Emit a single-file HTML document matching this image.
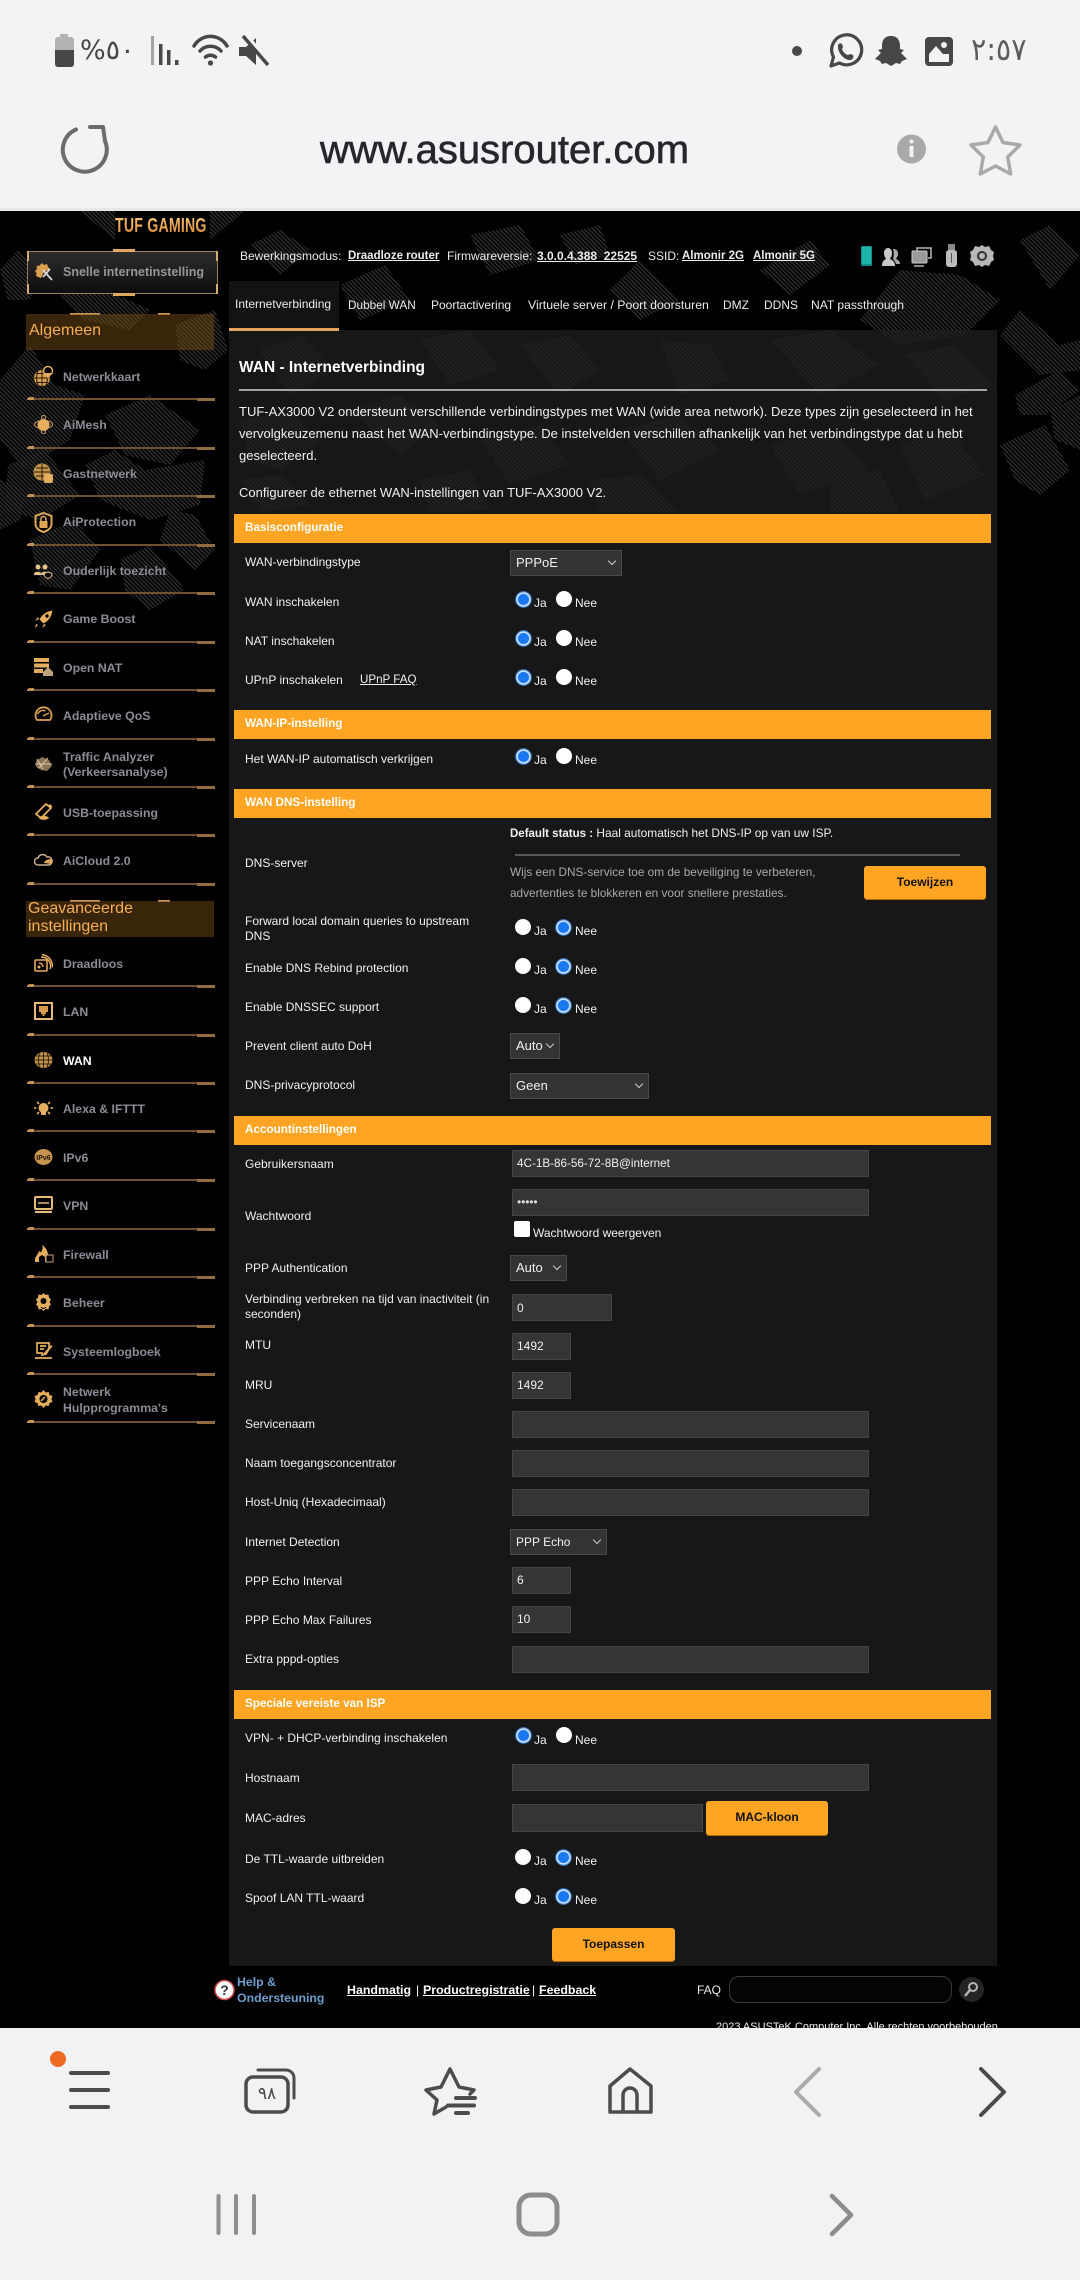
<!DOCTYPE html>
<html><head><meta charset="utf-8"><title>WAN - Internetverbinding</title>
<style>
*{box-sizing:border-box}
html,body{margin:0;padding:0;background:#000}
#p{position:relative;width:1080px;height:2280px;overflow:hidden;background:#000;font-family:"Liberation Sans","DejaVu Sans",sans-serif;color:#fff}
#p>*{position:absolute}
.t{white-space:nowrap;line-height:18px;font-size:12px;color:#f0f0f0}
.h{left:234px;width:757px;height:29px;background:#ffa523;color:#fff;font-weight:bold;font-size:11.700px;line-height:28px;padding-left:11px;white-space:nowrap}
.r{width:16px;height:16px;border-radius:50%;background:#fff}
.c{width:17px;height:17px;border-radius:50%;background:radial-gradient(circle,#1a78f2 0 5.2px,#dbe8fb 6px 6.6px,#5f9fe8 7.4px,#1c4f8a 8.4px)}
.in{height:27px;background:#353535;border:1px solid #444;left:512px}
.se{height:26px;background:#333;border:1px solid #484848;left:510px;color:#f0f0f0;font-size:13px;line-height:24px;padding-left:5px}
.se i{position:absolute;right:6px;top:7px;width:6px;height:6px;border-right:1px solid #ccc;border-bottom:1px solid #ccc;transform:rotate(45deg)}
.b{background:#ffa523;border-radius:3px;color:#111;font-weight:bold;font-size:12px;text-align:center;box-shadow:0 1px 0 #b06c10}
.s{left:27px;width:188px;height:2px;background:#6f5130}
.s:before{content:"";position:absolute;left:0;top:-1px;width:7px;height:3px;background:#c4935a;border-radius:3px 0 0 0}
.s:after{content:"";position:absolute;right:0;top:0;width:18px;height:3px;background:#8f6c42}
.n{left:63px;font-weight:bold;font-size:12.300px;line-height:16px;color:#8b8c96;white-space:nowrap}
.ic{left:34px;width:19px;height:19px}
.tb{color:#ececec;font-size:12px;line-height:18px;white-space:nowrap}
.bb{font-weight:bold;font-size:11.500px}
u{text-underline-offset:1px}
</style></head><body><div id="p">

<!-- light chrome -->
<div style="left:0;top:0;width:1080px;height:208px;background:#f2f3f5"></div>
<div style="left:0;top:208px;width:1080px;height:3px;background:#e6e7e9"></div>

<!-- camouflage background -->
<svg style="left:0;top:211px" width="1080" height="460" viewBox="0 211 1080 460">
<defs><pattern id="ha" width="3" height="3" patternUnits="userSpaceOnUse" patternTransform="rotate(45)"><rect width="3" height="1.300" fill="#333"/></pattern></defs>
<g fill="url(#ha)">
<polygon points="80,211 115,211 115,240"/><polygon points="210,240 245,211 210,211"/>
<polygon points="0,270 18,250 40,275 30,300 8,300"/>
<polygon points="60,295 95,285 150,310 130,330 85,320"/>
<polygon points="0,380 30,345 55,385 85,395 70,440 25,470 0,440"/>
<polygon points="175,325 215,310 228,350 205,370 180,360"/>
<polygon points="105,415 150,395 200,430 170,465 125,455"/>
<polygon points="8,465 45,450 80,495 40,520 5,510"/>
<polygon points="85,465 115,450 145,470 205,460 200,505 150,520 100,500"/>
<polygon points="170,510 195,515 215,550 195,570 160,540"/>
<polygon points="0,480 25,490 20,520 0,530"/>
<polygon points="30,540 75,520 100,550 70,590 40,585"/>
<polygon points="120,560 150,545 185,590 150,610 125,590"/>
<polygon points="250,245 280,230 310,250 280,275"/>
<polygon points="340,285 385,265 410,300 360,320"/>
<polygon points="470,235 520,225 540,260 490,275"/>
<polygon points="610,290 640,260 680,300 640,320"/>
<polygon points="560,235 600,225 610,255 575,265"/>
<polygon points="760,270 810,240 830,265 790,295"/>
<polygon points="860,320 900,270 960,275 1000,300 965,335 900,345"/>
<polygon points="1020,240 1050,225 1080,255 1050,290"/>
<polygon points="1000,335 1020,310 1060,345 1080,340 1080,370 1040,375"/>
<polygon points="1015,395 1060,370 1080,390 1045,415 1020,415"/>
<polygon points="1050,410 1080,395 1080,450 1055,440"/>
<polygon points="1000,445 1045,425 1070,470 1040,495 1015,480"/>
<polygon points="260,350 300,335 335,370 290,395"/>
<polygon points="420,340 470,330 500,370 450,385"/>
<polygon points="240,420 290,410 320,440 280,470 250,460"/>
<polygon points="350,410 400,395 440,425 400,455"/>
<polygon points="520,345 570,335 600,370 560,395"/>
<polygon points="660,340 710,345 730,380 680,395"/>
<polygon points="770,340 830,330 880,365 820,395"/>
<polygon points="905,355 955,345 995,385 945,400"/>
<polygon points="480,440 540,425 570,465 510,485"/>
<polygon points="620,430 680,415 720,450 660,480"/>
<polygon points="770,445 830,430 870,470 800,495"/>
<polygon points="900,445 950,430 985,475 925,500"/>
<polygon points="240,480 280,475 310,505 260,512"/>
<polygon points="420,480 470,470 490,510 430,512"/>
<polygon points="590,480 640,475 680,512 600,512"/>
<polygon points="830,480 880,470 900,512 830,512"/>
</g>
</svg>

<!-- content panel -->
<div style="left:229px;top:330px;width:768px;height:1636px;background:rgba(30,30,30,.76)"></div>
<div style="left:229px;top:540px;width:768px;height:1426px;background:#171717"></div>

<!-- status bar -->
<svg style="left:50px;top:30px" width="230" height="42" viewBox="50 30 230 42" fill="#474747">
<path d="M60 34h8v3h3a3 3 0 0 1 3 3v24a3 3 0 0 1-3 3H58a3 3 0 0 1-3-3V40a3 3 0 0 1 3-3h2z" fill="#b3b3b3"/>
<path d="M55 50h19v14a3 3 0 0 1-3 3H58a3 3 0 0 1-3-3z"/>
<rect x="151" y="36" width="3" height="29" fill="#a3a3a3"/><rect x="159" y="44" width="3.500" height="21"/><rect x="167" y="50" width="3.500" height="15"/><rect x="175" y="60" width="3.500" height="5"/>
<g fill="none" stroke="#474747" stroke-width="3.500" stroke-linecap="round"><path d="M194 46a19 19 0 0 1 33 0"/><path d="M200 51a14 14 0 0 1 21 0"/><path d="M205.500 57a8 8 0 0 1 10 0"/></g>
<circle cx="210.500" cy="63" r="2.600"/>
<path d="M239 47h7l10-9v27l-10-9h-7z"/><path d="M246 36l23 29" stroke="#f2f3f5" stroke-width="6" fill="none"/><path d="M243 36l25 29" stroke="#474747" stroke-width="3.500" fill="none"/>
</svg>
<div style="left:80px;top:32px;font:27px/38px 'DejaVu Sans',sans-serif;color:#474747;white-space:nowrap;letter-spacing:-1px"><bdo dir="ltr">%٥٠</bdo></div>
<svg style="left:785px;top:30px" width="175" height="44" viewBox="785 30 175 44">
<circle cx="797" cy="51" r="5" fill="#474747"/>
<path d="M831 66l2.500-9a15 15 0 1 1 6 6z" fill="none" stroke="#474747" stroke-width="3.200" stroke-linejoin="round"/>
<path d="M838 45c1-2 3-2 4-1l1 3-1 2c1 3 3 5 6 6l2-1 3 1c1 2 0 4-2 5-6 1-14-7-13-15z" fill="#474747"/>
<path d="M891 36c7 0 9 5 9 10v3l4 1-3 3 6 6-5 2-2 3-4-1-5 3-5-3-4 1-2-3-5-2 6-6-3-3 4-1v-3c0-5 2-10 9-10z" fill="#474747"/>
<rect x="925" y="37" width="28" height="29" rx="4" fill="#474747"/>
<rect x="929" y="54" width="20" height="8" fill="#f2f3f5"/><path d="M929 54l7-8 7 8z" fill="#f2f3f5"/><circle cx="944" cy="45" r="3" fill="#f2f3f5"/>
</svg>
<div style="left:971px;top:31px;font:31px/38px 'DejaVu Sans',sans-serif;color:#5c5c5c;white-space:nowrap;letter-spacing:-1px;transform:scaleX(.92);transform-origin:0 0"><bdo dir="ltr">٢:٥٧</bdo></div>

<!-- address bar -->
<svg style="left:55px;top:118px" width="60" height="60" viewBox="55 118 60 60" fill="none" stroke="#6c6c6c" stroke-width="4" stroke-linecap="round" stroke-linejoin="round">
<path d="M76 129.500A22 22 0 1 0 105 141"/><path d="M90 127H103L105 141"/>
</svg>
<div style="left:320px;top:126px;font-size:40px;line-height:48px;color:#26272a;-webkit-text-stroke:.6px #26272a;white-space:nowrap">www.asusrouter.com</div>
<svg style="left:895px;top:122px" width="130" height="54" viewBox="895 122 130 54">
<circle cx="911.500" cy="149" r="14.500" fill="#a9a9a9"/><circle cx="911.500" cy="141.500" r="2" fill="#f2f3f5"/><rect x="909.500" y="146" width="4" height="11" fill="#f2f3f5"/>
<path d="M995.500 127l7.500 15.500 17 2.500-12.300 12 3 17-15.200-8-15.200 8 3-17-12.300-12 17-2.500z" fill="none" stroke="#a9a9a9" stroke-width="3.500" stroke-linejoin="round"/>
</svg>

<!-- top header -->
<div style="left:115px;top:214px;font-size:20.500px;line-height:24px;font-weight:bold;letter-spacing:.3px;color:#f1a24a;white-space:nowrap;transform:scaleX(.69);transform-origin:0 0;background:linear-gradient(#ffcf7e,#d57e2e);-webkit-background-clip:text;background-clip:text;-webkit-text-fill-color:transparent">TUF GAMING</div>
<div class="tb" style="left:240px;top:247px">Bewerkingsmodus:</div>
<div class="tb bb" style="left:348px;top:247px"><u>Draadloze router</u></div>
<div class="tb" style="left:447px;top:247px">Firmwareversie:</div>
<div class="tb" style="left:537px;top:247px;font-weight:bold"><u>3.0.0.4.388_22525</u></div>
<div class="tb" style="left:648px;top:247px">SSID:</div>
<div class="tb bb" style="left:682px;top:247px"><u>Almonir 2G</u></div>
<div class="tb bb" style="left:753px;top:247px"><u>Almonir 5G</u></div>
<svg style="left:855px;top:240px" width="140" height="32" viewBox="855 240 140 32">
<rect x="861" y="246" width="11" height="20" rx="1.500" fill="#128f8a"/><rect x="862" y="247" width="9" height="17" fill="#1bb5ab"/>
<g transform="translate(-3 0)"><path d="M885 266c0-5 2-6 4-7-1-2-2-3-2-6 0-3 2-5 4-5s4 2 4 5c0 3-1 4-2 6 2 1 5 2 5 7z" fill="#c9c9c9"/><path d="M896 249c3 0 5 1 5 5 0 2-1 3-2 5 2 1 4 2 4 5h-4c-1-3-2-4-3-5 1-3 1-7 0-10z" fill="#a8a8a8"/></g>
<rect x="912" y="251" width="15" height="12" rx="1" fill="#9a9a9a" stroke="#ccc"/><path d="M917 251v-3h14v10h-3M914 266h10" fill="none" stroke="#b5b5b5" stroke-width="1.500"/>
<rect x="948" y="244" width="7" height="6" fill="#888"/><rect x="946" y="250" width="11" height="17" rx="3" fill="#bdbdbd"/><path d="M951.500 253v10" stroke="#555"/>
<path d="M982 245l3 2 4-1 2 4 3 2-1 4 1 4-3 2-2 4-4-1-3 2-3-2-4 1-2-4-3-2 1-4-1-4 3-2 2-4 4 1z" fill="#b8b8b8"/><circle cx="982" cy="256" r="4" fill="none" stroke="#333" stroke-width="2"/>
</svg>

<!-- tabs -->
<div style="left:229px;top:281px;width:110px;height:50px;background:#131313;border-bottom:3px solid #e5a45c"></div>
<div class="tb" style="left:235px;top:295px">Internetverbinding</div>
<div class="tb" style="left:348px;top:296px;font-size:11.800px">Dubbel WAN</div>
<div class="tb" style="left:431px;top:296px">Poortactivering</div>
<div class="tb" style="left:528px;top:296px;font-size:12.300px">Virtuele server / Poort doorsturen</div>
<div class="tb" style="left:723px;top:296px">DMZ</div>
<div class="tb" style="left:764px;top:296px">DDNS</div>
<div class="tb" style="left:811px;top:296px;font-size:12.100px">NAT passthrough</div>

<!-- title -->
<div class="t" style="left:239px;top:358px;font-size:15.500px;line-height:20px;font-weight:bold;color:#fff">WAN - Internetverbinding</div>
<div style="left:239px;top:389px;width:748px;height:2px;background:#a9a5a2"></div>
<div class="t" style="left:239px;top:403px;font-size:13px">TUF-AX3000 V2 ondersteunt verschillende verbindingstypes met WAN (wide area network). Deze types zijn geselecteerd in het</div>
<div class="t" style="left:239px;top:425px;font-size:13px">vervolgkeuzemenu naast het WAN-verbindingstype. De instelvelden verschillen afhankelijk van het verbindingstype dat u hebt</div>
<div class="t" style="left:239px;top:447px;font-size:13px">geselecteerd.</div>
<div class="t" style="left:239px;top:484px;font-size:13px">Configureer de ethernet WAN-instellingen van TUF-AX3000 V2.</div>

<!-- section headers -->
<div class="h" style="top:514px">Basisconfiguratie</div>
<div class="h" style="top:710px">WAN-IP-instelling</div>
<div class="h" style="top:789px">WAN DNS-instelling</div>
<div class="h" style="top:1116px">Accountinstellingen</div>
<div class="h" style="top:1690px">Speciale vereiste van ISP</div>

<!-- Basis -->
<div class="t" style="left:245px;top:553px">WAN-verbindingstype</div>
<div class="se" style="top:550px;width:112px">PPPoE<i></i></div>
<div class="t" style="left:245px;top:593px">WAN inschakelen</div>
<div class="c" style="left:515px;top:591px"></div><div class="t" style="left:534px;top:594px">Ja</div><div class="r" style="left:556px;top:591px"></div><div class="t" style="left:575px;top:594px">Nee</div>
<div class="t" style="left:245px;top:632px">NAT inschakelen</div>
<div class="c" style="left:515px;top:630px"></div><div class="t" style="left:534px;top:633px">Ja</div><div class="r" style="left:556px;top:630px"></div><div class="t" style="left:575px;top:633px">Nee</div>
<div class="t" style="left:245px;top:671px">UPnP inschakelen</div><div class="t" style="left:360px;top:671px;font-size:11.600px"><u>UPnP FAQ</u></div>
<div class="c" style="left:515px;top:669px"></div><div class="t" style="left:534px;top:672px">Ja</div><div class="r" style="left:556px;top:669px"></div><div class="t" style="left:575px;top:672px">Nee</div>

<!-- WAN IP -->
<div class="t" style="left:245px;top:750px">Het WAN-IP automatisch verkrijgen</div>
<div class="c" style="left:515px;top:748px"></div><div class="t" style="left:534px;top:751px">Ja</div><div class="r" style="left:556px;top:748px"></div><div class="t" style="left:575px;top:751px">Nee</div>

<!-- DNS -->
<div class="t" style="left:510px;top:824px;font-size:11.900px"><b style="font-size:11.500px">Default status :</b> Haal automatisch het DNS-IP op van uw ISP.</div>
<div style="left:515px;top:854px;width:445px;height:2px;background:#55585c"></div>
<div class="t" style="left:510px;top:863px;color:#aaa;font-size:11.800px">Wijs een DNS-service toe om de beveiliging te verbeteren,</div>
<div class="t" style="left:510px;top:884px;color:#aaa;font-size:11.800px">advertenties te blokkeren en voor snellere prestaties.</div>
<div class="t" style="left:245px;top:854px">DNS-server</div>
<div class="b" style="left:864px;top:866px;width:122px;height:33px;line-height:32px">Toewijzen</div>
<div class="t" style="left:245px;top:912px">Forward local domain queries to upstream</div>
<div class="t" style="left:245px;top:927px">DNS</div>
<div class="r" style="left:515px;top:919px"></div><div class="t" style="left:534px;top:922px">Ja</div><div class="c" style="left:555px;top:919px"></div><div class="t" style="left:575px;top:922px">Nee</div>
<div class="t" style="left:245px;top:959px">Enable DNS Rebind protection</div>
<div class="r" style="left:515px;top:958px"></div><div class="t" style="left:534px;top:961px">Ja</div><div class="c" style="left:555px;top:958px"></div><div class="t" style="left:575px;top:961px">Nee</div>
<div class="t" style="left:245px;top:998px">Enable DNSSEC support</div>
<div class="r" style="left:515px;top:997px"></div><div class="t" style="left:534px;top:1000px">Ja</div><div class="c" style="left:555px;top:997px"></div><div class="t" style="left:575px;top:1000px">Nee</div>
<div class="t" style="left:245px;top:1037px">Prevent client auto DoH</div>
<div class="se" style="top:1033px;width:50px">Auto<i></i></div>
<div class="t" style="left:245px;top:1076px">DNS-privacyprotocol</div>
<div class="se" style="top:1073px;width:139px">Geen<i></i></div>

<!-- Account -->
<div class="t" style="left:245px;top:1155px">Gebruikersnaam</div>
<div class="in" style="top:1150px;width:357px"></div>
<div class="t" style="left:517px;top:1155px;font-size:11.700px">4C-1B-86-56-72-8B@internet</div>
<div class="t" style="left:245px;top:1207px">Wachtwoord</div>
<div class="in" style="top:1189px;width:357px"></div>
<div class="t" style="left:517px;top:1193px;font-size:12px;letter-spacing:-.1px;color:#ddd">•••••</div>
<div style="left:514px;top:1221px;width:16px;height:16px;background:#fff;border-radius:2px"></div>
<div class="t" style="left:533px;top:1224px">Wachtwoord weergeven</div>
<div class="t" style="left:245px;top:1259px">PPP Authentication</div>
<div class="se" style="top:1255px;width:57px">Auto<i></i></div>
<div class="t" style="left:245px;top:1290px">Verbinding verbreken na tijd van inactiviteit (in</div>
<div class="t" style="left:245px;top:1305px">seconden)</div>
<div class="in" style="top:1294px;width:100px"></div>
<div class="t" style="left:517px;top:1299px">0</div>
<div class="t" style="left:245px;top:1336px">MTU</div>
<div class="in" style="top:1333px;width:59px"></div>
<div class="t" style="left:517px;top:1337px">1492</div>
<div class="t" style="left:245px;top:1376px">MRU</div>
<div class="in" style="top:1372px;width:59px"></div>
<div class="t" style="left:517px;top:1376px">1492</div>
<div class="t" style="left:245px;top:1415px">Servicenaam</div>
<div class="in" style="top:1411px;width:357px"></div>
<div class="t" style="left:245px;top:1454px">Naam toegangsconcentrator</div>
<div class="in" style="top:1450px;width:357px"></div>
<div class="t" style="left:245px;top:1493px">Host-Uniq (Hexadecimaal)</div>
<div class="in" style="top:1489px;width:357px"></div>
<div class="t" style="left:245px;top:1533px">Internet Detection</div>
<div class="se" style="top:1529px;width:97px;font-size:12px">PPP Echo<i></i></div>
<div class="t" style="left:245px;top:1572px">PPP Echo Interval</div>
<div class="in" style="top:1567px;width:59px"></div>
<div class="t" style="left:517px;top:1571px">6</div>
<div class="t" style="left:245px;top:1611px">PPP Echo Max Failures</div>
<div class="in" style="top:1606px;width:59px"></div>
<div class="t" style="left:517px;top:1610px">10</div>
<div class="t" style="left:245px;top:1650px">Extra pppd-opties</div>
<div class="in" style="top:1646px;width:357px"></div>

<!-- Speciale -->
<div class="t" style="left:245px;top:1729px">VPN- + DHCP-verbinding inschakelen</div>
<div class="c" style="left:515px;top:1727px"></div><div class="t" style="left:534px;top:1731px">Ja</div><div class="r" style="left:556px;top:1727px"></div><div class="t" style="left:575px;top:1731px">Nee</div>
<div class="t" style="left:245px;top:1769px">Hostnaam</div>
<div class="in" style="top:1764px;width:357px"></div>
<div class="t" style="left:245px;top:1809px">MAC-adres</div>
<div class="in" style="top:1804px;width:191px;height:28px"></div>
<div class="b" style="left:706px;top:1801px;width:122px;height:34px;line-height:33px">MAC-kloon</div>
<div class="t" style="left:245px;top:1850px">De TTL-waarde uitbreiden</div>
<div class="r" style="left:515px;top:1849px"></div><div class="t" style="left:534px;top:1852px">Ja</div><div class="c" style="left:555px;top:1849px"></div><div class="t" style="left:575px;top:1852px">Nee</div>
<div class="t" style="left:245px;top:1889px">Spoof LAN TTL-waard</div>
<div class="r" style="left:515px;top:1888px"></div><div class="t" style="left:534px;top:1891px">Ja</div><div class="c" style="left:555px;top:1888px"></div><div class="t" style="left:575px;top:1891px">Nee</div>
<div class="b" style="left:552px;top:1928px;width:123px;height:33px;line-height:32px">Toepassen</div>

<!-- footer -->
<svg style="left:214px;top:1979px" width="22" height="22" viewBox="0 0 22 22"><circle cx="10.500" cy="11" r="9.500" fill="#fff" stroke="#d34a4a" stroke-width="1.500"/><text x="10.500" y="16" text-anchor="middle" font-family="Liberation Sans" font-weight="bold" font-size="14" fill="#333">?</text></svg>
<div class="t" style="left:237px;top:1973px;color:#6d9fce;font-size:12.300px;font-weight:bold">Help &amp;</div>
<div class="t" style="left:237px;top:1989px;color:#6d9fce;font-size:12.300px;font-weight:bold">Ondersteuning</div>
<div class="t" style="left:347px;top:1981px;color:#fff;font-size:12.400px;font-weight:bold"><u>Handmatig</u></div>
<div class="t" style="left:416px;top:1981px;color:#fff">|</div>
<div class="t" style="left:423px;top:1981px;color:#fff;font-size:12.400px;font-weight:bold"><u>Productregistratie</u></div>
<div class="t" style="left:532px;top:1981px;color:#fff">|</div>
<div class="t" style="left:539px;top:1981px;color:#fff;font-size:12.400px;font-weight:bold"><u>Feedback</u></div>
<div class="t" style="left:697px;top:1981px">FAQ</div>
<div style="left:729px;top:1976px;width:223px;height:27px;border:1px solid #3a3a3a;border-radius:10px;background:#040404"></div>
<svg style="left:958px;top:1976px" width="27" height="27" viewBox="0 0 27 27"><circle cx="13.500" cy="13.500" r="12.500" fill="#242424"/><circle cx="15" cy="11" r="4" fill="none" stroke="#b5b5b5" stroke-width="2"/><path d="M12 14l-5 6" stroke="#b5b5b5" stroke-width="2.500"/></svg>
<div class="t" style="left:716px;top:2018px;font-size:11px">2023 ASUSTeK Computer Inc. Alle rechten voorbehouden</div>

<!-- sidebar -->
<div style="left:27px;top:251px;width:191px;height:43px;background:linear-gradient(#2d2d2d,#0d0d0d);border:1px solid #9a8058"></div>
<div style="left:113px;top:249px;width:22px;height:3px;background:#e0a860"></div>
<div style="left:113px;top:293px;width:22px;height:3px;background:#e0a860"></div>
<div style="left:27px;top:251px;width:2px;height:10px;background:#d9aa6d"></div><div style="left:216px;top:284px;width:2px;height:10px;background:#d9aa6d"></div>
<div style="left:27px;top:284px;width:2px;height:10px;background:#d9aa6d"></div><div style="left:216px;top:251px;width:2px;height:10px;background:#d9aa6d"></div>
<div class="n" style="left:63px;top:264px;font-size:12.500px;color:#96979c">Snelle internetinstelling</div>
<svg style="left:34px;top:262px" width="20" height="20" viewBox="0 0 20 20"><path d="M8 1l2 2 3-1 1 3 2 2-6 3-3 6-3-1-2-1 .5-3L1 9l2-2-.5-3 3-.500z" fill="#d9a04f"/><path d="M9 8l9 10M16 7l-7 8" stroke="#d5d5d5" stroke-width="1.800"/></svg>

<div style="left:70px;top:313px;width:30px;height:2px;background:#c99859"></div><div style="left:158px;top:313px;width:12px;height:2px;background:#c99859"></div>
<div style="left:26px;top:314px;width:188px;height:36px;background:rgba(120,80,20,.48)"></div>
<div class="t" style="left:29px;top:321px;font-size:16px;line-height:20px;color:#f7ad55">Algemeen</div>

<div class="n" style="top:369px">Netwerkkaart</div><div class="s" style="top:398px"></div>
<div class="n" style="top:417px">AiMesh</div><div class="s" style="top:447px"></div>
<div class="n" style="top:466px">Gastnetwerk</div><div class="s" style="top:495px"></div>
<div class="n" style="top:514px">AiProtection</div><div class="s" style="top:544px"></div>
<div class="n" style="top:563px">Ouderlijk toezicht</div><div class="s" style="top:592px"></div>
<div class="n" style="top:611px">Game Boost</div><div class="s" style="top:641px"></div>
<div class="n" style="top:660px">Open NAT</div><div class="s" style="top:689px"></div>
<div class="n" style="top:708px">Adaptieve QoS</div><div class="s" style="top:738px"></div>
<div class="n" style="top:749px">Traffic Analyzer</div><div class="n" style="top:764px">(Verkeersanalyse)</div><div class="s" style="top:786px"></div>
<div class="n" style="top:805px">USB-toepassing</div><div class="s" style="top:834px"></div>
<div class="n" style="top:853px">AiCloud 2.0</div><div class="s" style="top:883px"></div>

<div style="left:70px;top:900px;width:30px;height:2px;background:#c99859"></div><div style="left:158px;top:900px;width:12px;height:2px;background:#c99859"></div>
<div style="left:26px;top:901px;width:188px;height:36px;background:rgba(120,80,20,.48)"></div>
<div class="t" style="left:28px;top:899px;font-size:16px;line-height:20px;color:#f7ad55">Geavanceerde</div>
<div class="t" style="left:28px;top:917px;font-size:16px;line-height:20px;color:#f7ad55">instellingen</div>

<div class="n" style="top:956px">Draadloos</div><div class="s" style="top:985px"></div>
<div class="n" style="top:1004px">LAN</div><div class="s" style="top:1034px"></div>
<div class="n" style="top:1053px;color:#fff">WAN</div><div class="s" style="top:1082px"></div>
<div class="n" style="top:1101px">Alexa &amp; IFTTT</div><div class="s" style="top:1130px"></div>
<div class="n" style="top:1150px">IPv6</div><div class="s" style="top:1179px"></div>
<div class="n" style="top:1198px">VPN</div><div class="s" style="top:1228px"></div>
<div class="n" style="top:1247px">Firewall</div><div class="s" style="top:1276px"></div>
<div class="n" style="top:1295px">Beheer</div><div class="s" style="top:1325px"></div>
<div class="n" style="top:1344px">Systeemlogboek</div><div class="s" style="top:1373px"></div>
<div class="n" style="top:1384px">Netwerk</div><div class="n" style="top:1400px">Hulpprogramma's</div><div class="s" style="top:1421px"></div>

<!-- sidebar icons -->
<svg style="left:33px;top:365px" width="21" height="22" viewBox="0 0 21 22"><circle cx="9" cy="13" r="8" fill="#d9a04f"/><path d="M1 13h16M9 5v16M3 8.500h12M3 17.500h12M5 6c-2 5-2 9 0 14M13 6c2 5 2 9 0 14" stroke="#2a1c08" fill="none"/><circle cx="15" cy="6" r="4.500" fill="#000" stroke="#e5ad5e" stroke-width="1.500"/><path d="M15 14l-3-6h6z" fill="#e5ad5e"/></svg>
<svg style="left:34px;top:415px" width="19" height="19" viewBox="0 0 19 19"><ellipse cx="9.500" cy="9.500" rx="9" ry="4" fill="none" stroke="#caa06a"/><circle cx="9.500" cy="10" r="6" fill="#e6ad5e"/><circle cx="9.500" cy="2.500" r="2" fill="none" stroke="#caa06a"/><circle cx="9.500" cy="17" r="2" fill="none" stroke="#caa06a"/></svg>
<svg style="left:33px;top:463px" width="21" height="20" viewBox="0 0 21 20"><circle cx="9" cy="9" r="8.500" fill="#c6954d"/><path d="M1 9h16M9 1v16M3 5h12M3 13h12" stroke="#2a1c08"/><rect x="11" y="11" width="9" height="9" rx="2" fill="#e5ad5e"/></svg>
<svg style="left:34px;top:512px" width="19" height="21" viewBox="0 0 19 21"><path d="M9.500 1l8 3v8c0 4-4 7-8 8-4-1-8-4-8-8V4z" fill="none" stroke="#e0a75a" stroke-width="2"/><rect x="5.500" y="9" width="8" height="7" fill="#e0a75a"/><path d="M7 9V7a2.500 2.500 0 0 1 5 0v2" fill="none" stroke="#e0a75a" stroke-width="1.500"/></svg>
<svg style="left:34px;top:564px" width="19" height="15" viewBox="0 0 19 15"><circle cx="4" cy="3" r="2.500" fill="#e7c48e"/><circle cx="11" cy="3" r="2.500" fill="#e7c48e"/><path d="M0 10c0-3 7-3 7 0v1H0zM7 10c0-3 8-3 8 0v1H7z" fill="#e7c48e"/><path d="M14 8l4 1.500c0 3-2 4.500-4 5-2-.5-4-2-4-5z" fill="#000" stroke="#e7c48e"/></svg>
<svg style="left:34px;top:610px" width="19" height="19" viewBox="0 0 19 19"><path d="M18.500 .5c-1 7-5 11-9 13l-4-4c2-4 6-8 13-9z" fill="#e8b060"/><path d="M5 9l-4 2 3-4zM10 14l-2 4 4-3zM4 15l-3 3 1-4z" fill="#e8b060"/><circle cx="13" cy="6" r="1.700" fill="#000"/></svg>
<svg style="left:34px;top:658px" width="19" height="19" viewBox="0 0 19 19"><rect x="0" y="0" width="15" height="4" fill="#e5ad5e"/><rect x="0" y="5.500" width="15" height="4" fill="#e5ad5e"/><rect x="0" y="11" width="9" height="4" fill="#e5ad5e"/><path d="M9 14l5-5 5 5v4H9z" fill="#bfa27a"/></svg>
<svg style="left:34px;top:706px" width="19" height="16" viewBox="0 0 19 16"><path d="M3 14a8 8 0 1 1 13 0z" fill="none" stroke="#d9a04f" stroke-width="1.800"/><path d="M3.500 8a6 6 0 0 1 8-3" fill="none" stroke="#d9a04f" stroke-width="1.500"/><path d="M9 10l6-3" stroke="#d9a04f" stroke-width="1.500"/></svg>
<svg style="left:34px;top:755px" width="19" height="18" viewBox="0 0 19 18"><path d="M2 6l6-4 7 3 3 6-5 5-6-1-5-3z" fill="#8b7553"/><path d="M3 4l6 10M14 3l-9 10M1 9h17" stroke="#d7c5a5"/></svg>
<svg style="left:34px;top:803px" width="19" height="18" viewBox="0 0 19 18"><path d="M2 11L12 1l5 4-10 10z" fill="none" stroke="#e5ad5e" stroke-width="1.800"/><path d="M5 15c1-3 8-3 10 0-2 2-8 3-10 0z" fill="#e5ad5e"/><path d="M14 3l3 3 1-3-2-2z" fill="#e5ad5e"/></svg>
<svg style="left:34px;top:852px" width="19" height="15" viewBox="0 0 19 15"><path d="M4 13a3.500 3.500 0 0 1 0-7 5 5 0 0 1 9-1 4 4 0 0 1 2 8z" fill="none" stroke="#c9b08a" stroke-width="1.500"/><path d="M10 11c1-3 4-4 8-4v5z" fill="#e0a75a"/></svg>
<svg style="left:34px;top:954px" width="19" height="18" viewBox="0 0 19 18"><rect x="1" y="6" width="12" height="11" rx="1" fill="none" stroke="#e5ad5e" stroke-width="1.600"/><circle cx="5" cy="13" r="1.500" fill="#e5ad5e"/><path d="M5 9a4 4 0 0 1 4 4M7 3a9 9 0 0 1 9 12M8 .5a12 12 0 0 1 10.500 13" fill="none" stroke="#e5ad5e" stroke-width="1.500"/></svg>
<svg style="left:34px;top:1002px" width="19" height="18" viewBox="0 0 19 18"><rect x="1" y="1" width="17" height="16" fill="none" stroke="#e7ba78" stroke-width="2"/><path d="M5 4h9v6h-2v2h-1.500v2h-2v-2H7v-2H5z" fill="#d79a48"/></svg>
<svg style="left:34px;top:1051px" width="19" height="18" viewBox="0 0 19 18"><ellipse cx="9.500" cy="9" rx="9" ry="8" fill="#c6954d"/><path d="M.5 9h18M9.500 1v16M2 5h15M2 13h15M6 2c-2 4-2 10 0 14M13 2c2 4 2 10 0 14" stroke="#33230c" fill="none"/></svg>
<svg style="left:34px;top:1099px" width="19" height="18" viewBox="0 0 19 18"><circle cx="9.500" cy="9" r="5" fill="#e5ad5e"/><rect x="7" y="13" width="5" height="3" fill="#e5ad5e"/><path d="M0 9h2.500M16.500 9H19M3 3l2 2M16 3l-2 2M3 15l2-2M16 15l-2-2" stroke="#e5ad5e" stroke-width="1.600"/></svg>
<svg style="left:34px;top:1148px" width="19" height="18" viewBox="0 0 19 18"><ellipse cx="9.500" cy="9" rx="9" ry="8" fill="#c6954d"/><text x="9.500" y="12" font-family="Liberation Sans" font-size="7" font-weight="bold" text-anchor="middle" fill="#1e1406">IPv6</text></svg>
<svg style="left:34px;top:1196px" width="19" height="18" viewBox="0 0 19 18"><rect x="1" y="1" width="17" height="12" rx="1" fill="none" stroke="#e7ba78" stroke-width="2"/><path d="M4 7h11" stroke="#e7ba78" stroke-width="1.500"/><path d="M1 16h17" stroke="#e7ba78" stroke-width="2"/></svg>
<svg style="left:34px;top:1245px" width="20" height="18" viewBox="0 0 20 18"><path d="M1 17c-1-5 3-7 4-11 2 1 2 3 3-1 1-2 1-3 0-5 4 2 6 7 6 10v7z" fill="#e5ad5e"/><rect x="12" y="10" width="7" height="7" fill="#000" stroke="#c6a57a"/><path d="M5 17v-5l3-2 3 2v5z" fill="#000"/></svg>
<svg style="left:36px;top:1293px" width="15" height="19" viewBox="0 0 15 19"><path d="M7.500 0l2 2 3-.5.500 3 2 2-1.500 2.500 1.500 2.500-2 2-.5 3-3-.5-2 2-2-2-3 .5-.5-3-2-2L1.500 9 0 6.500l2-2 .5-3 3 .5z" fill="#e5ad5e"/><circle cx="7.500" cy="8" r="3" fill="#000"/><path d="M5 14a3 3 0 0 0 5 0" stroke="#000" fill="none"/></svg>
<svg style="left:34px;top:1342px" width="19" height="18" viewBox="0 0 19 18"><path d="M3 1h12v6l-3 5-4 1 0-2H3z" fill="none" stroke="#e5ad5e" stroke-width="1.700"/><path d="M6 4h6M6 7h4M1 16h17" stroke="#e5ad5e" stroke-width="1.700"/><path d="M9 12l8-9 1.500 1.500L10.500 13z" fill="#e5ad5e"/></svg>
<svg style="left:34px;top:1390px" width="19" height="19" viewBox="0 0 19 19"><path d="M9.500 0l2.200 2.500 3-.5.800 3 3 1-1 3 1 3-3 1-.8 3-3-.5L9.500 18l-2.200-2.500-3 .5-.8-3-3-1 1-3-1-3 3-1 .8-3 3 .5z" fill="#e5ad5e"/><circle cx="9.500" cy="9" r="4" fill="#000"/><path d="M7 11l4-4" stroke="#e5ad5e" stroke-width="1.500"/></svg>

<!-- bottom chrome -->
<div style="left:0;top:2028px;width:1080px;height:252px;background:#f1f2f4"></div>
<div style="left:50px;top:2051px;width:16px;height:16px;border-radius:50%;background:#ee6a22"></div>
<svg style="left:0;top:2028px" width="1080" height="252" viewBox="0 2028 1080 252" fill="none" stroke="#4c4c4c" stroke-linecap="round" stroke-linejoin="round">
<path d="M71 2073h37M71 2090h37M71 2107h37" stroke-width="4"/>
<rect x="246" y="2077" width="42" height="35" rx="7" stroke-width="3.500"/>
<path d="M258 2070h28a8 8 0 0 1 8 8v20" stroke-width="3"/>
<path d="M446 2107L434 2114L437 2100L426 2090L441 2087L450 2069L459 2087L474 2090L470 2094" stroke-width="3.500"/>
<path d="M456 2098h19M448 2105.500h26M456 2113h12" stroke-width="4"/>
<path d="M610 2112v-26l20-17 21 17v26z" stroke-width="3.500"/>
<path d="M623 2112v-17a7 7 0 0 1 14 0v17" stroke-width="3.500"/>
<path d="M819 2069l-23 23 23 23" stroke="#ababab" stroke-width="4"/>
<path d="M981 2069l23 23-23 23" stroke-width="4"/>
<path d="M218.500 2196v37M236 2196v37M254 2196v37" stroke="#8f8f8f" stroke-width="4"/>
<rect x="519" y="2195" width="38" height="39" rx="12" stroke="#8c8c8c" stroke-width="5"/>
<path d="M832 2196l19 19-19 19" stroke="#8c8c8c" stroke-width="4.500"/>
</svg>
<div style="left:254px;top:2083px;width:26px;text-align:center;font:17px/22px 'DejaVu Sans',sans-serif;color:#474747"><bdo dir="ltr">٩٨</bdo></div>

</div></body></html>
